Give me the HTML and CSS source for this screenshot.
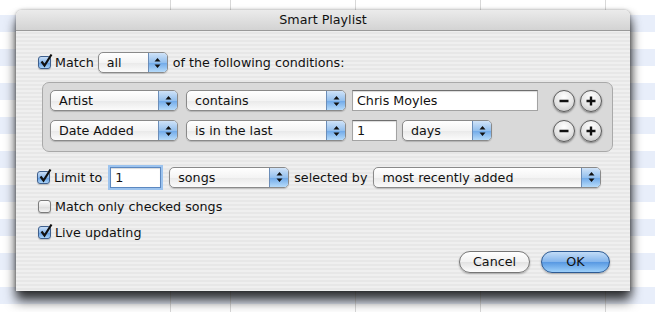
FILE: index.html
```html
<!DOCTYPE html>
<html lang="en">
<head>
    <meta charset="UTF-8">
    <title>Smart Playlist</title>
    <link rel="stylesheet" href="styles.css">
</head>
<body>
    <div class="window">
        <div class="titlebar">Smart Playlist</div>
        <div class="content">
            <!-- match line -->
            <div class="row match-row">
                <span class="check on"><svg width="14" height="14" viewBox="0 0 14 14"><path d="M2.5 6.5 L5.5 10.5 L12.5 -0.5" stroke="#111" stroke-width="2.2" fill="none"/></svg></span>
                <span class="txt">Match</span>
                <div class="popup w-all"><span class="label">all</span><span class="arrows"><svg width="7" height="12" viewBox="0 0 7 12"><path d="M3.5 1 L6.5 4.5 L0.5 4.5 Z M3.5 11 L6.5 7.5 L0.5 7.5 Z" fill="#111"/></svg></span></div>
                <span class="txt">of the following conditions:</span>
            </div>

            <div class="conditions">
                <div class="cond-row">
                    <div class="popup w-field"><span class="label">Artist</span><span class="arrows"><svg width="7" height="12" viewBox="0 0 7 12"><path d="M3.5 1 L6.5 4.5 L0.5 4.5 Z M3.5 11 L6.5 7.5 L0.5 7.5 Z" fill="#111"/></svg></span></div>
                    <div class="popup w-op"><span class="label">contains</span><span class="arrows"><svg width="7" height="12" viewBox="0 0 7 12"><path d="M3.5 1 L6.5 4.5 L0.5 4.5 Z M3.5 11 L6.5 7.5 L0.5 7.5 Z" fill="#111"/></svg></span></div>
                    <div class="field w-value">Chris Moyles</div>
                    <div class="pm">
                        <span class="round"><svg width="12" height="12" viewBox="0 0 12 12"><path d="M1.5 6 H10.5" stroke="#111" stroke-width="2.4"/></svg></span>
                        <span class="round"><svg width="12" height="12" viewBox="0 0 12 12"><path d="M1.5 6 H10.5 M6 1.5 V10.5" stroke="#111" stroke-width="2.4"/></svg></span>
                    </div>
                </div>
                <div class="cond-row">
                    <div class="popup w-field"><span class="label">Date Added</span><span class="arrows"><svg width="7" height="12" viewBox="0 0 7 12"><path d="M3.5 1 L6.5 4.5 L0.5 4.5 Z M3.5 11 L6.5 7.5 L0.5 7.5 Z" fill="#111"/></svg></span></div>
                    <div class="popup w-op"><span class="label">is in the last</span><span class="arrows"><svg width="7" height="12" viewBox="0 0 7 12"><path d="M3.5 1 L6.5 4.5 L0.5 4.5 Z M3.5 11 L6.5 7.5 L0.5 7.5 Z" fill="#111"/></svg></span></div>
                    <div class="field w-num">1</div>
                    <div class="popup w-days"><span class="label">days</span><span class="arrows"><svg width="7" height="12" viewBox="0 0 7 12"><path d="M3.5 1 L6.5 4.5 L0.5 4.5 Z M3.5 11 L6.5 7.5 L0.5 7.5 Z" fill="#111"/></svg></span></div>
                    <div class="pm">
                        <span class="round"><svg width="12" height="12" viewBox="0 0 12 12"><path d="M1.5 6 H10.5" stroke="#111" stroke-width="2.4"/></svg></span>
                        <span class="round"><svg width="12" height="12" viewBox="0 0 12 12"><path d="M1.5 6 H10.5 M6 1.5 V10.5" stroke="#111" stroke-width="2.4"/></svg></span>
                    </div>
                </div>
            </div>

            <!-- limit line -->
            <div class="row limit-row">
                <span class="check on"><svg width="14" height="14" viewBox="0 0 14 14"><path d="M2.5 6.5 L5.5 10.5 L12.5 -0.5" stroke="#111" stroke-width="2.2" fill="none"/></svg></span>
                <span class="txt">Limit to</span>
                <div class="field focus w-limit">1</div>
                <div class="popup w-songs"><span class="label">songs</span><span class="arrows"><svg width="7" height="12" viewBox="0 0 7 12"><path d="M3.5 1 L6.5 4.5 L0.5 4.5 Z M3.5 11 L6.5 7.5 L0.5 7.5 Z" fill="#111"/></svg></span></div>
                <span class="txt">selected by</span>
                <div class="popup w-sort"><span class="label">most recently added</span><span class="arrows"><svg width="7" height="12" viewBox="0 0 7 12"><path d="M3.5 1 L6.5 4.5 L0.5 4.5 Z M3.5 11 L6.5 7.5 L0.5 7.5 Z" fill="#111"/></svg></span></div>
            </div>

            <div class="row check-row first">
                <span class="check"></span>
                <span class="txt">Match only checked songs</span>
            </div>
            <div class="row check-row">
                <span class="check on"><svg width="14" height="14" viewBox="0 0 14 14"><path d="M2.5 6.5 L5.5 10.5 L12.5 -0.5" stroke="#111" stroke-width="2.2" fill="none"/></svg></span>
                <span class="txt">Live updating</span>
            </div>

            <div class="buttons">
                <span class="btn cancel">Cancel</span>
                <span class="btn ok">OK</span>
            </div>
        </div>
    </div>
</body>
</html>
```

FILE: styles.css
```css
body {
    margin: 0;
    width: 655px;
    height: 312px;
    overflow: hidden;
    font-family: "DejaVu Sans", "Lucida Grande", sans-serif;
    font-size: 12.7px;
    color: #111;
    background:
        linear-gradient(#d8d8d8, #d8d8d8) 170px 0 / 1px 100% no-repeat,
        linear-gradient(#d8d8d8, #d8d8d8) 230px 0 / 1px 100% no-repeat,
        linear-gradient(#d8d8d8, #d8d8d8) 355px 0 / 1px 100% no-repeat,
        linear-gradient(#d8d8d8, #d8d8d8) 480px 0 / 1px 100% no-repeat,
        linear-gradient(#d8d8d8, #d8d8d8) 605px 0 / 1px 100% no-repeat,
        repeating-linear-gradient(#e8eefa 0 17px, #fff 17px 34px) 0 15px / 100% 400px no-repeat,
        #fff;
}
.window {
    margin: 10px 0 0 16px;
    width: 614px;
    height: 281px;
    border-radius: 6px 6px 0 0;
    background: repeating-linear-gradient(#efefef 0 2px, #e7e7e7 2px 4px);
    box-shadow: 0 10px 12px rgba(0, 0, 0, 0.7), 2px 4px 8px rgba(0, 0, 0, 0.35), 0 0 3px rgba(0, 0, 0, 0.3);
    overflow: hidden;
}
.titlebar {
    height: 21px;
    box-sizing: border-box;
    border-bottom: 1px solid #9a9a9a;
    background: linear-gradient(#ebebeb, #d3d3d3);
    text-align: center;
    line-height: 20px;
}
.content {
    padding: 21px 20px 0 22px;
}
.row {
    display: flex;
    align-items: center;
    height: 21px;
}
.txt {
    white-space: nowrap;
}

/* checkbox */
.check {
    display: inline-flex;
    width: 13px;
    height: 13px;
    box-sizing: border-box;
    border: 1px solid #7b7b7b;
    border-radius: 3px;
    background: linear-gradient(#fdfdfd, #e6e6e6 50%, #d9d9d9 51%, #f4f4f4);
    box-shadow: 0 1px 1px rgba(0, 0, 0, 0.2);
    margin-right: 4px;
}
.check.on {
    border-color: #3e5f8d;
    background: linear-gradient(#c9def6, #8ab8ec 50%, #5f9ae0 51%, #a9d3f8);
}
.check svg {
    overflow: visible;
    margin: -2px 0 0 0;
}

/* popup menus */
.popup {
    display: flex;
    height: 21px;
    box-sizing: border-box;
    border: 1px solid #8a8a8a;
    border-radius: 5px;
    background: linear-gradient(#ffffff, #f4f4f4 50%, #e9e9e9 51%, #fbfbfb);
    box-shadow: 0 1px 1px rgba(0, 0, 0, 0.18);
    overflow: hidden;
}
.popup .label {
    flex: 1;
    padding-left: 8px;
    line-height: 19px;
    white-space: nowrap;
}
.popup .arrows {
    width: 18px;
    display: flex;
    align-items: center;
    justify-content: center;
    border-left: 1px solid #6b8db8;
    background: linear-gradient(#d0e3f8, #94c0ee 50%, #6ea8e8 51%, #b6dbfa);
}
.w-all { width: 70px; margin: 0 5px 0 4px; }
.w-field { width: 128px; }
.w-op { width: 160px; margin-left: 8px; }
.w-days { width: 90px; margin-left: 5px; }
.w-songs { width: 120px; margin: 0 5px 0 8px; }
.w-sort { width: 228px; margin-left: 6px; }

/* text fields */
.field {
    height: 21px;
    box-sizing: border-box;
    border: 1px solid #a3a3a3;
    border-top-color: #6e6e6e;
    background: #fff;
    box-shadow: inset 0 1px 1px rgba(0, 0, 0, 0.15);
    padding-left: 4px;
    line-height: 19px;
    white-space: nowrap;
}
.w-value { width: 186px; margin-left: 6px; }
.w-num { width: 45px; margin-left: 6px; }
.w-limit { width: 51px; margin-left: 8px; }
.field.focus {
    border-color: #5c88c0;
    box-shadow: 0 0 0 2px #9cc3ee, inset 0 1px 1px rgba(0, 0, 0, 0.15);
}

/* condition box */
.conditions {
    margin: 9px 0 0 4px;
    width: 571px;
    box-sizing: border-box;
    padding: 7px 10px 10px 7px;
    border: 1px solid #a9a9a9;
    border-radius: 7px;
    background: #d9d9d9;
}
.cond-row {
    display: flex;
    align-items: center;
    height: 21px;
}
.cond-row + .cond-row {
    margin-top: 9px;
}
.pm {
    display: flex;
    gap: 5px;
    margin-left: auto;
}
.round {
    width: 22px;
    height: 22px;
    box-sizing: border-box;
    border: 1px solid #5a5a5a;
    border-radius: 50%;
    background: radial-gradient(circle at 50% 30%, #ffffff, #e4e4e4 55%, #bdbdbd);
    box-shadow: 0 1px 2px rgba(0, 0, 0, 0.45);
    display: flex;
    align-items: center;
    justify-content: center;
}

.limit-row {
    margin-top: 14px;
    height: 22px;
}
.limit-row .check {
    margin-left: -1px;
}
.check-row.first {
    margin-top: 8px;
}
.check-row {
    margin-top: 5px;
}

/* push buttons */
.buttons {
    display: flex;
    justify-content: flex-end;
    gap: 11px;
    margin-top: 8px;
}
.btn {
    height: 22px;
    box-sizing: border-box;
    border-radius: 11px;
    text-align: center;
    line-height: 20px;
    box-shadow: 0 1px 2px rgba(0, 0, 0, 0.3);
}
.cancel {
    width: 71px;
    border: 1px solid #767676;
    background: linear-gradient(#ffffff, #f1f1f1 50%, #e2e2e2 51%, #fdfdfd);
}
.ok {
    width: 69px;
    border: 1px solid #2d5a93;
    background: linear-gradient(#c2dcf7, #82b4ec 50%, #5798e2 51%, #9dd0fa);
}
```
